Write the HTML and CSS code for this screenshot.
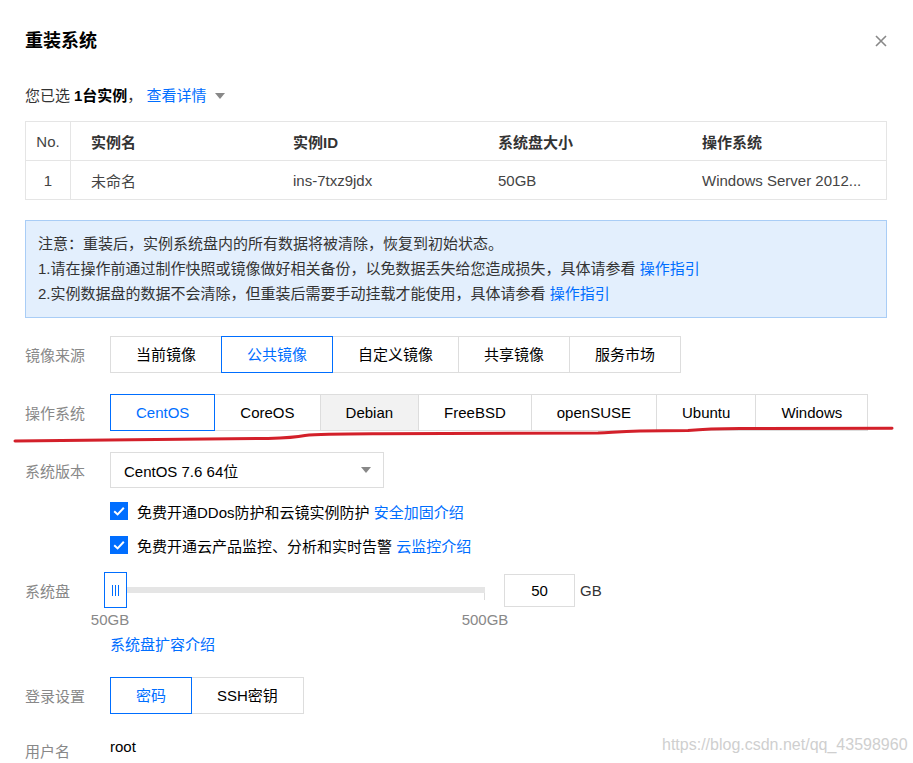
FILE: index.html
```html
<!DOCTYPE html>
<html lang="zh-CN">
<head>
<meta charset="utf-8">
<title>重装系统</title>
<link rel="stylesheet" href="styles.css">
</head>
<body>
<div class="dialog">
  <div class="header">
    <h1 class="title">重装系统</h1>
    <svg class="close" width="12" height="12" viewBox="0 0 12 12"><path d="M1 1L11 11M11 1L1 11" stroke="#888" stroke-width="1.6" fill="none"/></svg>
  </div>

  <div class="selected">您已选 <b>1台实例</b>，&nbsp;<a class="link">查看详情</a><span class="caret"></span></div>

  <table class="instances">
    <thead>
      <tr><th class="c-no">No.</th><th class="c-name">实例名</th><th class="c-id">实例ID</th><th class="c-disk">系统盘大小</th><th class="c-os">操作系统</th></tr>
    </thead>
    <tbody>
      <tr><td class="c-no">1</td><td>未命名</td><td>ins-7txz9jdx</td><td>50GB</td><td class="c-os">Windows Server 2012...</td></tr>
    </tbody>
  </table>

  <div class="notice">
    <p>注意：重装后，实例系统盘内的所有数据将被清除，恢复到初始状态。</p>
    <p>1.请在操作前通过制作快照或镜像做好相关备份，以免数据丢失给您造成损失，具体请参看 <a class="link">操作指引</a></p>
    <p>2.实例数据盘的数据不会清除，但重装后需要手动挂载才能使用，具体请参看 <a class="link">操作指引</a></p>
  </div>

  <div class="form-row row-source">
    <div class="label">镜像来源</div>
    <div class="seg">
      <span class="seg-item">当前镜像</span>
      <span class="seg-item is-active">公共镜像</span>
      <span class="seg-item">自定义镜像</span>
      <span class="seg-item">共享镜像</span>
      <span class="seg-item">服务市场</span>
    </div>
  </div>

  <div class="form-row row-os">
    <div class="label">操作系统</div>
    <div class="seg">
      <span class="seg-item is-active">CentOS</span>
      <span class="seg-item">CoreOS</span>
      <span class="seg-item is-hover">Debian</span>
      <span class="seg-item">FreeBSD</span>
      <span class="seg-item">openSUSE</span>
      <span class="seg-item">Ubuntu</span>
      <span class="seg-item">Windows</span>
    </div>
  </div>

  <div class="form-row row-version">
    <div class="label">系统版本</div>
    <div class="select"><span>CentOS 7.6 64位</span><span class="select-arrow"></span></div>
  </div>

  <div class="checks">
    <div class="check-row">
      <span class="checkbox"><svg width="18" height="18" viewBox="0 0 18 18"><path d="M4.2 9.2L7.6 12.4L13.8 5.8" stroke="#fff" stroke-width="2" fill="none"/></svg></span>
      <span>免费开通DDos防护和云镜实例防护</span>&nbsp;<a class="link">安全加固介绍</a>
    </div>
    <div class="check-row">
      <span class="checkbox"><svg width="18" height="18" viewBox="0 0 18 18"><path d="M4.2 9.2L7.6 12.4L13.8 5.8" stroke="#fff" stroke-width="2" fill="none"/></svg></span>
      <span>免费开通云产品监控、分析和实时告警</span>&nbsp;<a class="link">云监控介绍</a>
    </div>
  </div>

  <div class="form-row row-disk">
    <div class="label">系统盘</div>
    <div class="slider">
      <div class="track"></div>
      <div class="handle"><span></span><span></span><span></span></div>
    </div>
    <div class="num-input">50</div>
    <span class="unit">GB</span>
  </div>
  <div class="slider-marks">
    <span class="mark"><span>50GB</span></span>
    <span class="mark"><span>500GB</span></span>
  </div>
  <div class="disk-link"><a class="link">系统盘扩容介绍</a></div>

  <div class="form-row row-login">
    <div class="label">登录设置</div>
    <div class="seg">
      <span class="seg-item is-active">密码</span>
      <span class="seg-item">SSH密钥</span>
    </div>
  </div>

  <div class="form-row row-user">
    <div class="label label-user">用户名</div>
    <div class="user-value">root</div>
  </div>
</div>

<svg class="annotation" width="913" height="763" viewBox="0 0 913 763">
  <path d="M15 441 C 90 440, 200 439, 268 438.5 C 285 438, 295 437.5, 305 435.5 C 320 434, 340 434, 380 433.8 L 598 433 C 612 432.5, 618 431.5, 640 431 L 688 430.5 C 700 429.5, 712 428.8, 740 428.6 L 892 428.2" stroke="#d3202a" stroke-width="3" fill="none" stroke-linecap="round" stroke-linejoin="round"/>
</svg>

<div class="watermark">https://blog.csdn.net/qq_43598960</div>
</body>
</html>
```

FILE: styles.css
```css
* { box-sizing: border-box; }

html, body {
  margin: 0;
  padding: 0;
  background: #fff;
}

body {
  font-family: "Liberation Sans", "Noto Sans CJK SC", sans-serif;
  font-size: 15px;
  color: #333;
  width: 913px;
  height: 763px;
  overflow: hidden;
  position: relative;
}

.dialog {
  padding: 28px 26px 0 25px;
}

.link {
  color: #006eff;
  text-decoration: none;
  cursor: pointer;
}

.header {
  display: flex;
  align-items: center;
  justify-content: space-between;
  height: 26px;
}

.title {
  margin: 0;
  font-size: 18px;
  line-height: 26px;
  font-weight: bold;
  color: #000;
}

.close {
  display: block;
}

.selected {
  margin-top: 31px;
  line-height: 22px;
  color: #333;
  display: flex;
  align-items: center;
}

.selected b {
  color: #000;
  margin-left: 4px;
}

.caret {
  display: inline-block;
  width: 0;
  height: 0;
  margin-left: 8px;
  border-left: 5px solid transparent;
  border-right: 5px solid transparent;
  border-top: 6px solid #888;
}

.instances {
  margin-top: 14px;
  width: 862px;
  table-layout: fixed;
  border-collapse: separate;
  border-spacing: 0;
  border-top: 1px solid #e5e5e5;
  border-left: 1px solid #e5e5e5;
  border-right: 1px solid #e5e5e5;
  font-size: 15px;
}

.instances th,
.instances td {
  height: 39px;
  padding: 0 0 0 20px;
  text-align: left;
  border-bottom: 1px solid #e5e5e5;
  color: #444;
  white-space: nowrap;
}

.instances th {
  font-weight: bold;
  color: #333;
}

.instances .c-no {
  width: 45px;
  padding: 0;
  text-align: center;
  border-right: 1px solid #e5e5e5;
  font-weight: normal;
  color: #444;
}

.instances .c-name { width: 202px; }
.instances .c-id { width: 205px; }
.instances .c-disk { width: 204px; }

.notice {
  margin-top: 20px;
  background: #e3effd;
  border: 1px solid #a9cdf6;
  padding: 10px 12px 11px 12px;
  color: #333;
}

.notice p {
  margin: 0;
  line-height: 25px;
}

.form-row {
  display: flex;
  align-items: center;
}

.label {
  width: 85px;
  flex: none;
  color: #888;
}

.row-source { margin-top: 18px; }
.row-os { margin-top: 21px; }
.row-version { margin-top: 21px; }

.seg {
  display: flex;
}

.seg-item {
  height: 37px;
  line-height: 35px;
  padding: 0 25px;
  border: 1px solid #ddd;
  color: #000;
  background: #fff;
  white-space: nowrap;
  position: relative;
}

.seg-item + .seg-item {
  margin-left: -1px;
}

.seg-item.is-active {
  border-color: #006eff;
  color: #006eff;
  z-index: 1;
}

.seg-item.is-hover {
  background: #f2f2f2;
}

.select {
  width: 274px;
  height: 36px;
  border: 1px solid #ddd;
  padding: 0 12px 0 13px;
  display: flex;
  align-items: center;
  justify-content: space-between;
  color: #000;
}

.select-arrow {
  width: 0;
  height: 0;
  border-left: 5px solid transparent;
  border-right: 5px solid transparent;
  border-top: 6px solid #888;
}

.checks {
  margin-top: 6px;
  padding-left: 85px;
}

.check-row {
  height: 34px;
  display: flex;
  align-items: center;
  color: #000;
}

.checkbox {
  width: 18px;
  height: 18px;
  background: #006eff;
  margin-right: 9px;
  display: flex;
  flex: none;
}

.row-disk {
  margin-top: 10px;
}

.slider {
  width: 375px;
  height: 36px;
  position: relative;
  display: flex;
  align-items: center;
}

.track {
  width: 100%;
  height: 6px;
  background: #e5e5e5;
  position: relative;
}

.track::after {
  content: "";
  position: absolute;
  right: 0;
  top: 6px;
  width: 1px;
  height: 7px;
  background: #ddd;
}

.handle {
  position: absolute;
  left: -6px;
  top: 0;
  width: 23px;
  height: 36px;
  background: #fff;
  border: 1px solid #006eff;
  display: flex;
  align-items: center;
  justify-content: center;
  gap: 2px;
}

.handle span {
  width: 1px;
  height: 11px;
  background: #006eff;
}

.num-input {
  margin-left: 19px;
  width: 71px;
  height: 33px;
  border: 1px solid #ddd;
  display: flex;
  align-items: center;
  justify-content: center;
  color: #000;
}

.unit {
  margin-left: 5px;
  color: #333;
}

.slider-marks {
  margin-top: 2px;
  margin-left: 85px;
  width: 375px;
  display: flex;
  justify-content: space-between;
  height: 20px;
  line-height: 20px;
  color: #888;
}

.mark {
  width: 0;
  display: flex;
  justify-content: center;
  white-space: nowrap;
}

.disk-link {
  margin-top: 5px;
  padding-left: 85px;
  line-height: 20px;
}

.row-login {
  margin-top: 22px;
}

.row-user {
  margin-top: 23px;
  align-items: flex-start;
}

.label-user {
  padding-top: 5px;
  line-height: 20px;
}

.user-value {
  line-height: 20px;
  color: #000;
}

.annotation {
  position: absolute;
  left: 0;
  top: 0;
  pointer-events: none;
}

.watermark {
  position: absolute;
  left: 662px;
  top: 735px;
  font-size: 16px;
  line-height: 20px;
  color: #cfcfcf;
  white-space: nowrap;
}
```
